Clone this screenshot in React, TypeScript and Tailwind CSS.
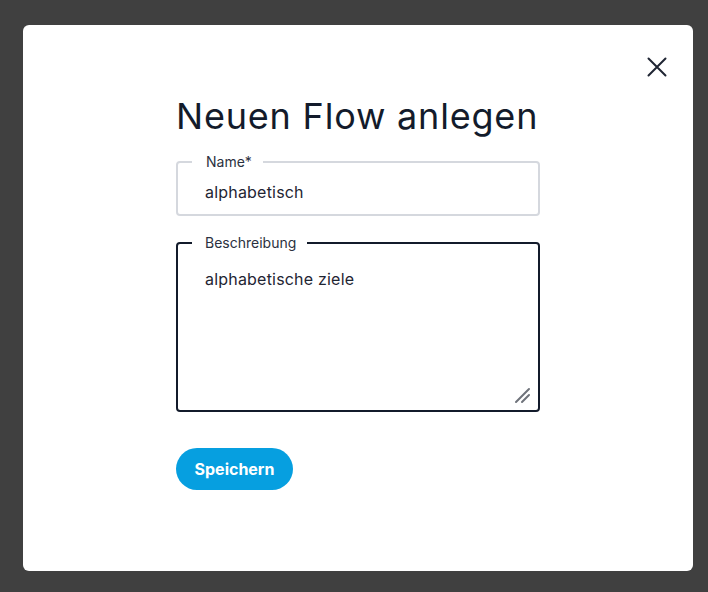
import { useState } from "react";

function CloseIcon() {
    return (
        <svg width="20" height="20" viewBox="0 0 20 20" fill="none" stroke="#1f2533" strokeWidth="2" strokeLinecap="round">
            <path d="M1.5 1.5 L18.5 18.5 M18.5 1.5 L1.5 18.5" />
        </svg>
    );
}

function ResizeGrip() {
    return (
        <svg width="18" height="18" viewBox="0 0 18 18" fill="none" stroke="#6f737b" strokeWidth="2" strokeLinecap="round">
            <path d="M2 16 L15 3 M8 16 L15 9" />
        </svg>
    );
}

export default function App() {
    const [name, setName] = useState("alphabetisch");
    const [desc, setDesc] = useState("alphabetische ziele");

    return (
        <div className="h-[592px] w-full bg-[#404040] pl-[23px] pr-[15px] pt-[25px] font-['Inter',sans-serif]">
            <div className="relative h-[546px] rounded-md bg-white">
                <button className="absolute right-[26px] top-[32px] p-0" aria-label="Schließen">
                    <CloseIcon />
                </button>
                <div className="mx-auto flex w-[364px] flex-col pt-[71px]">
                    <h1 className="text-[36px] leading-[40px] font-normal tracking-[0.8px] text-[#131b2b]">Neuen Flow anlegen</h1>

                    <fieldset className="mt-[18px] rounded border-2 border-[#d5d8de] px-[27px] pb-[10px] pt-[10px]">
                        <legend className="ml-[-13px] pl-[14px] pr-[11px] text-[14px] leading-4 text-[#2b3140]">Name*</legend>
                        <input
                            value={name}
                            onChange={(e) => setName(e.target.value)}
                            className="w-full bg-transparent text-[16px] leading-6 tracking-[0.2px] text-[#1f2533] outline-none"
                        />
                    </fieldset>

                    <fieldset className="relative mt-[19px] rounded border-2 border-[#131b2b] p-0">
                        <legend className="ml-[14px] pl-[13px] pr-[11px] text-[14px] leading-4 text-[#2b3140]">Beschreibung</legend>
                        <textarea
                            value={desc}
                            onChange={(e) => setDesc(e.target.value)}
                            className="block h-[159px] w-full resize-none bg-transparent px-[27px] pt-[16px] text-[16px] leading-6 tracking-[0.2px] text-[#1f2533] outline-none"
                        />
                        <span className="pointer-events-none absolute bottom-[6px] right-[6px]">
                            <ResizeGrip />
                        </span>
                    </fieldset>

                    <div className="mt-[36px]">
                        <button className="h-[42px] w-[117px] rounded-full bg-[#069fe0] text-[16px] font-bold text-white">
                            Speichern
                        </button>
                    </div>
                </div>
            </div>
        </div>
    );
}
